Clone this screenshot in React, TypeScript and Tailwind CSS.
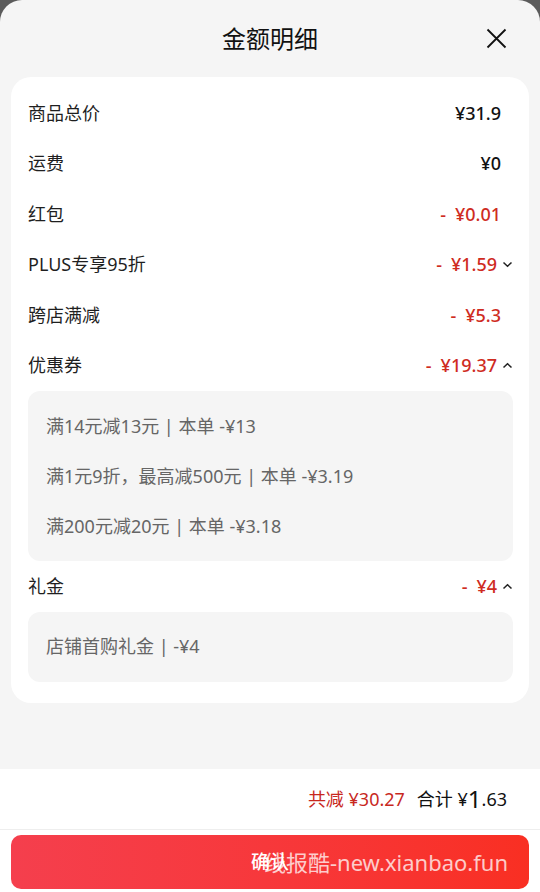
import React from 'react';

const font = { fontFamily: '"Noto Sans", "Noto Sans CJK SC", sans-serif' };

type Row = { label: string; amount: string; red?: boolean; chevron?: 'up' | 'down' };

const rows: Row[] = [
  { label: '商品总价', amount: '¥31.9' },
  { label: '运费', amount: '¥0' },
  { label: '红包', amount: '- ¥0.01', red: true },
  { label: 'PLUS专享95折', amount: '- ¥1.59', red: true, chevron: 'down' },
  { label: '跨店满减', amount: '- ¥5.3', red: true },
  { label: '优惠券', amount: '- ¥19.37', red: true, chevron: 'up' },
];

const coupons = ['满14元减13元 | 本单 -¥13', '满1元9折，最高减500元 | 本单 -¥3.19', '满200元减20元 | 本单 -¥3.18'];

function Chevron({ dir }: { dir: 'up' | 'down' }) {
  return (
    <svg width="11" height="7" viewBox="0 0 11 7" className="ml-[5px]" fill="none" stroke="#222" strokeWidth="1.5">
      {dir === 'down' ? <path d="M1.5 1.5 L5.5 5.3 L9.5 1.5" /> : <path d="M1.5 5.5 L5.5 1.7 L9.5 5.5" />}
    </svg>
  );
}

function AmountRow({ row }: { row: Row }) {
  return (
    <div className="flex h-[50.5px] items-center justify-between">
      <span className="text-[18px] text-[#1f1f1f]">{row.label}</span>
      <div className={`flex items-center ${row.chevron ? '' : 'mr-[12px]'}`}>
        <span className={`text-[18px] font-medium ${row.red ? 'text-[#cf2c1f]' : 'text-[#111]'}`}>
          {row.amount.replace('- ', '-\u2002')}
        </span>
        {row.chevron && <Chevron dir={row.chevron} />}
      </div>
    </div>
  );
}

export default function App() {
  return (
    <div className="h-[892px] w-[540px] overflow-hidden bg-[#5b5b5b]" style={font}>
      <div className="flex h-full flex-col rounded-t-[22px] bg-[#f5f5f5]">
        <div className="relative flex h-[77px] items-center justify-center">
          <span className="text-[24px] text-[#111]">金额明细</span>
          <svg className="absolute right-[33px] top-[28px]" width="21" height="21" viewBox="0 0 21 21" stroke="#111" strokeWidth="1.8">
            <path d="M1.5 1.5 L19.5 19.5 M19.5 1.5 L1.5 19.5" />
          </svg>
        </div>

        <div className="mx-[11px] rounded-[20px] bg-white pb-[21px] pl-[17px] pr-[16px] pt-[11px]">
          {rows.map((r) => (
            <AmountRow key={r.label} row={r} />
          ))}
          <div className="rounded-[12px] bg-[#f5f5f5] py-[10px] pl-[18px]">
            {coupons.map((c) => (
              <div key={c} className="flex h-[50px] items-center text-[18px] text-[#666]">
                {c}
              </div>
            ))}
          </div>
          <AmountRow row={{ label: '礼金', amount: '- ¥4', red: true, chevron: 'up' }} />
          <div className="flex h-[70px] items-center rounded-[12px] bg-[#f5f5f5] pl-[18px] text-[18px] text-[#666]">
            店铺首购礼金 | -¥4
          </div>
        </div>

        <div className="flex-1" />

        <div className="flex h-[61px] items-center justify-end border-b border-[#eeeeee] bg-white pr-[33px]">
          <span className="text-[18px] text-[#c8281e]">共减 ¥30.27</span>
          <span className="ml-[12px] text-[18px] text-[#111]">合计 ¥</span>
          <span className="text-[24px] leading-none text-[#111]">1</span>
          <span className="text-[18px] text-[#111]">.63</span>
        </div>

        <div className="h-[62px] bg-white px-[11px] pt-[5px]">
          <div className="relative flex h-[54px] items-center justify-center rounded-[10px] bg-gradient-to-r from-[#f53f4d] to-[#f92f22]">
            <span className="text-[19px] font-medium text-white">确认</span>
            <span className="absolute right-[21px] text-[22px] text-white/75">线报酷-new.xianbao.fun</span>
          </div>
        </div>
      </div>
    </div>
  );
}
